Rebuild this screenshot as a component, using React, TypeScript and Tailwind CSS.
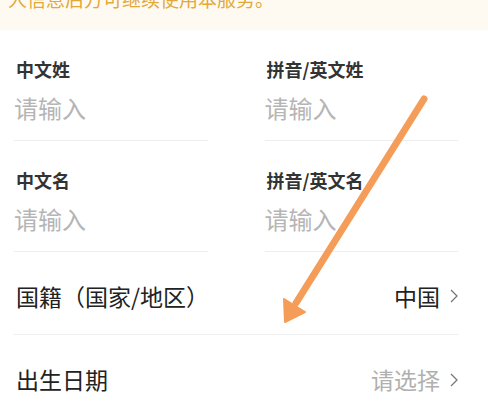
const font = { fontFamily: '"Noto Sans CJK SC", "Noto Sans", sans-serif' }

const NameField = ({ label }: { label: string }) => (
    <div className="flex flex-col gap-[18px] pt-[30px] pb-[20px] border-b border-[#eeeeee]">
        <div className="text-[18px] leading-[18px] font-semibold text-[#333333] pl-[2px]">{label}</div>
        <div className="text-[24px] leading-[24px] text-[#b5b5b5]">请输入</div>
    </div>
)

const SelectRow = ({ label, value, muted = false, last = false }: { label: string; value: string; muted?: boolean; last?: boolean }) => (
    <div className={`flex items-center justify-between h-[83px] pt-[6px] ${last ? "" : "border-b border-[#eeeeee]"}`}>
        <span className="text-[23px] leading-[23px] text-[#222222] pl-[2px]">{label}</span>
        <span className="flex items-center gap-[10px]">
            <span className={`text-[23px] leading-[23px] ${muted ? "text-[#b0b0b0]" : "text-[#222222]"}`}>{value}</span>
            <svg width="8" height="14" viewBox="0 0 8 14" fill="none">
                <path d="M1 1l6 6-6 6" stroke="#777777" strokeWidth="1.3" />
            </svg>
        </span>
    </div>
)

export default function App() {
    return (
        <div className="relative w-[488px] h-[401px] overflow-hidden bg-white" style={font}>
            <div className="h-[30px] overflow-hidden bg-[#fffaf1]">
                <div className="-mt-[10px] pl-[8px] text-[19px] leading-[18px] text-[#e2a83a] whitespace-nowrap">
                    人信息后方可继续使用本服务。
                </div>
            </div>
            <div className="pl-[14px] pr-[30px]">
                <div className="grid grid-cols-2 gap-x-[57px]">
                    <NameField label="中文姓" />
                    <NameField label="拼音/英文姓" />
                    <NameField label="中文名" />
                    <NameField label="拼音/英文名" />
                </div>
                <SelectRow label="国籍（国家/地区）" value="中国" />
                <SelectRow label="出生日期" value="请选择" muted last />
            </div>
            {/* annotation arrow drawn over the form */}
            <svg className="absolute inset-0 pointer-events-none" width="488" height="401" viewBox="0 0 488 401">
                <line x1="424" y1="99" x2="296" y2="303" stroke="#f59d58" strokeWidth="7" strokeLinecap="round" />
                <polygon points="285,322 284,299 305,312" fill="#f59d58" stroke="#f59d58" strokeWidth="2" strokeLinejoin="round" />
            </svg>
        </div>
    )
}
